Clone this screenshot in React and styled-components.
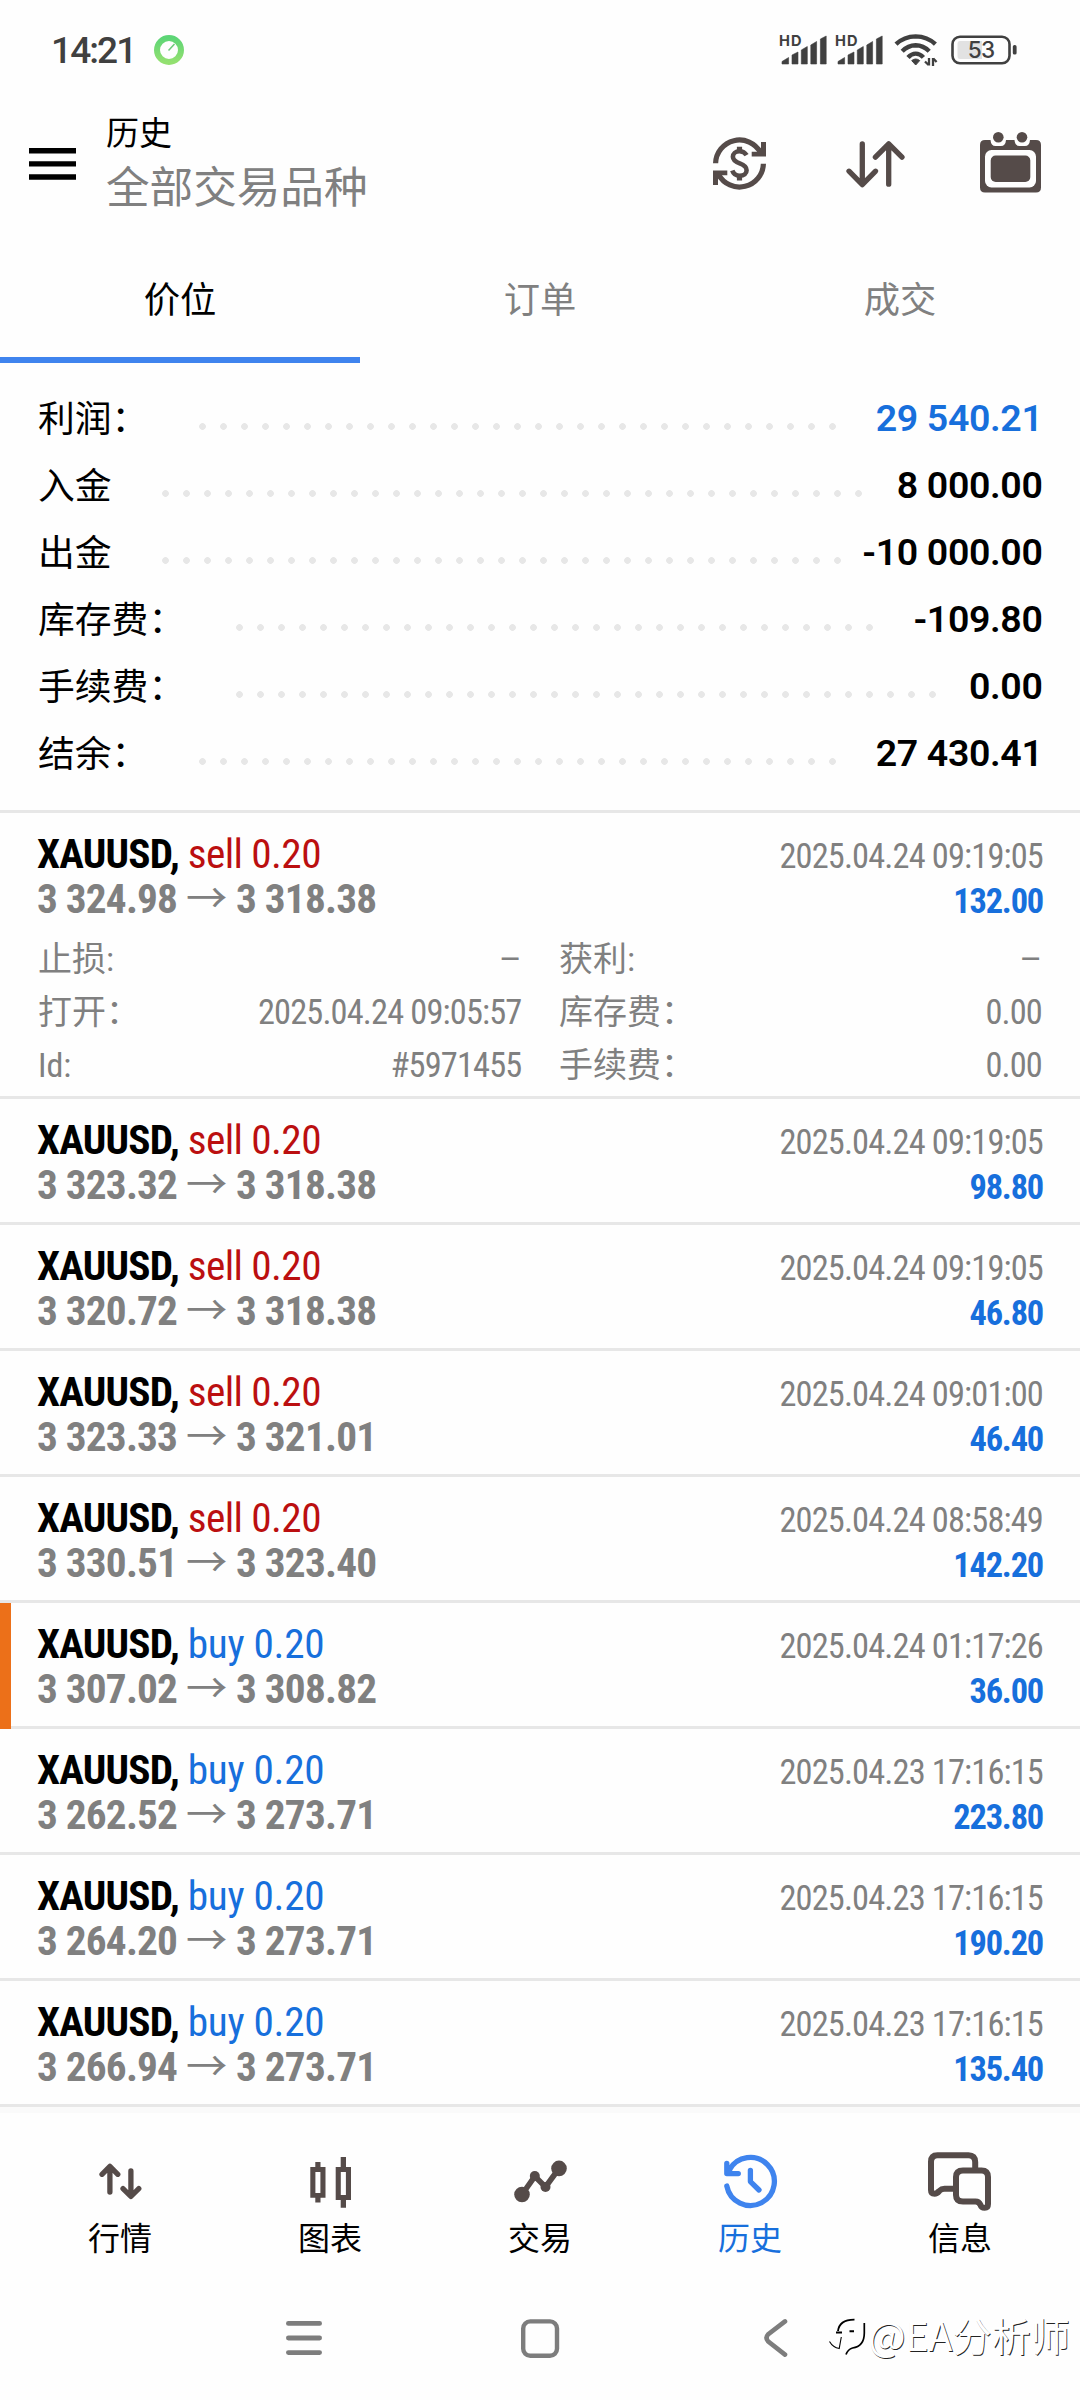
import React from "react";
import styled, { createGlobalStyle } from "styled-components";

const CJK = `"Noto Sans CJK SC"`;
const SANS = `Roboto, ${CJK}, sans-serif`;
const CONDENSED = `"Roboto Condensed", Roboto, ${CJK}, sans-serif`;
const INK = "#554b49";
const BLUE = "#176fdc";
const GREY = "#808080";
const LINE = "#e7e7e7";

const GlobalStyle = createGlobalStyle`
  html, body { margin: 0; background: #fefefe; }
  * { box-sizing: border-box; }
  svg { display: block; flex: none; overflow: visible; }
`;

const Screen = styled.main`
  position: relative;
  display: flex;
  flex-direction: column;
  width: 1080px;
  height: 2400px;
  overflow: hidden;
  background: #fefefe;
  color: #000;
  font-family: ${SANS};
`;

/* status bar */
const StatusBar = styled.div`
  display: flex;
  align-items: center;
  height: 100px;
  padding: 0 63px 0 51px;
  color: #404040;
`;
const Clock = styled.span`
  width: 103px;
  font-size: 37px;
  font-weight: 480;
  letter-spacing: -1.9px;
`;
const StatusIcons = styled.div`
  display: flex;
  align-items: center;
  margin: 0 0 1px auto;
`;
const StatusSlot = styled.div`
  margin-left: ${(p) => p.$gap}px;
`;

/* app bar */
const AppBar = styled.header`
  display: flex;
  align-items: center;
  height: 127px;
  padding: 0 39px 0 29px;
`;
const Titles = styled.div`
  align-self: flex-start;
  margin: 7px auto 0 30px;
`;
const Title = styled.div`
  font-size: 33px;
  line-height: 54px;
`;
const Subtitle = styled.div`
  font-size: 43.6px;
  line-height: 56px;
  color: ${GREY};
`;
const Action = styled.div`
  margin: 0 0 ${(p) => p.$lift || 0}px ${(p) => p.$gap || 0}px;
`;

/* tabs */
const Tabs = styled.nav`
  display: grid;
  grid-template-columns: repeat(3, 1fr);
  height: 136px;
`;
const Tab = styled.div`
  padding-top: 46px;
  border-bottom: 6px solid ${(p) => (p.$active ? "#3f84ee" : "transparent")};
  color: ${(p) => (p.$active ? "#000" : GREY)};
  font-size: 36.3px;
  line-height: 56px;
  text-align: center;
`;

/* summary */
const Summary = styled.section`
  padding: 23px 37.5px 22px 38px;
  border-bottom: 3px solid ${LINE};
`;
const SummaryRow = styled.div`
  display: flex;
  height: 67px;
  line-height: 67px;
  font-size: 36.8px;
  white-space: pre;
`;
const Leader = styled.div`
  width: ${(p) => p.$dots * 21}px;
  height: 7px;
  margin: 37px 0 0 50.5px;
  background: radial-gradient(circle at 3.5px 3.5px, #e7e7e7 3px, transparent 3.7px) 0 0 / 21px 7px repeat-x;
`;
const SummaryValue = styled.span`
  margin-left: auto;
  color: ${(p) => (p.$accent ? BLUE : "#000")};
  font-size: 37.5px;
  font-weight: 620;
  letter-spacing: -0.35px;
  line-height: 65px;
`;

/* deals */
const Deal = styled.article`
  position: relative;
  padding: 18.5px 37px 0;
  height: ${(p) => (p.$open ? 286 : 126)}px;
  border-bottom: 3px solid ${LINE};
  font-family: ${CONDENSED};
`;
const Marker = styled.span`
  position: absolute;
  left: 0;
  top: 0;
  bottom: -3px;
  width: 11px;
  background: #ec7019;
`;
const DealLine = styled.div`
  display: flex;
  align-items: baseline;
  justify-content: space-between;
  height: 45px;
  line-height: 45px;
  font-size: 41.25px;
  letter-spacing: -0.8px;
  white-space: pre;
`;
const Symbol = styled.span`
  font-weight: 700;
`;
const Side = styled.span`
  color: ${(p) => (p.$side === "sell" ? "#bb0f10" : BLUE)};
  letter-spacing: ${(p) => (p.$side === "sell" ? -0.6 : -0.3)}px;
`;
const Prices = styled.span`
  color: ${GREY};
  font-weight: 700;
`;
const Arrow = styled.span`
  font-weight: 400;
  letter-spacing: 0.2px;
`;
const Time = styled.span`
  color: ${GREY};
  font-size: 34.4px;
  letter-spacing: -0.85px;
`;
const Profit = styled.span`
  color: ${BLUE};
  font-size: 34.4px;
  font-weight: 700;
  letter-spacing: -1.2px;
`;
const Details = styled.div`
  display: grid;
  grid-template-columns: 483.5px 483px;
  column-gap: 37.5px;
  margin-top: 11.5px;
  padding-left: 1px;
`;
const Detail = styled.div`
  display: flex;
  justify-content: space-between;
  height: 53px;
  line-height: 53px;
  color: ${GREY};
  font-size: 34px;
`;
const DetailValue = styled.span`
  font-family: ${(p) => (p.$empty ? SANS : CONDENSED)};
  font-size: 34.4px;
  letter-spacing: ${(p) => (p.$empty ? 0 : -0.85)}px;
`;

/* bottom navigation */
const BottomNav = styled.nav`
  display: grid;
  grid-template-columns: repeat(5, 210px);
  height: 173px;
  padding: 36px 15px 0;
  border-top: 6px solid #fafafa;
`;
const NavItem = styled.div`
  display: flex;
  flex-direction: column;
  align-items: center;
  gap: 6px;
  color: ${(p) => (p.$active ? BLUE : "#000")};
  font-size: 32px;
  line-height: 40px;
`;
const SystemNav = styled.div`
  display: flex;
  align-items: center;
  height: 116px;
  padding-left: 286px;
`;
const SystemKey = styled.div`
  margin-left: ${(p) => p.$gap || 0}px;
`;
const Watermark = styled.div`
  position: absolute;
  right: 10px;
  bottom: 39px;
  display: flex;
  align-items: center;
  gap: 1px;
  color: #fff;
  font-family: ${CJK}, sans-serif;
  font-size: 39.2px;
  font-weight: 400;
  line-height: 54px;
  text-shadow: 0.8px 0.8px 0 #222;
`;

const Signal = () => (
  <svg width="47" height="30" viewBox="0 0 47 30" fill="#404040">
    <text x="-1" y="11.4" fontFamily="Inter, sans-serif" fontSize="14.6" fontWeight="700" textLength="22.5">HD</text>
    <path d="M2 29V26.5L8.6 22.5V29ZM12 29V20L18 17V29ZM21.3 29V15L27.3 11.5V29ZM30.8 29V10L36.6 6.5V29ZM40.4 29V4L46.2 1V29Z" stroke="#404040" strokeWidth=".6" strokeLinejoin="round" />
  </svg>
);

const Wifi = () => (
  <svg width="43" height="33" viewBox="0 0 43 33" fill="none" stroke="#404040" strokeWidth="4.4">
    <path d="M2 11.2Q10 3.6 21.7 3.4Q33.4 3.6 41.4 11.2M8.2 18.2Q14 12.3 21.7 12.2Q29.4 12.3 35.2 18.2M14 24.4Q17.5 20.6 21.7 20.6Q26 20.6 29.4 24.4" />
    <path d="M17.7 27.6Q21.7 24.4 25.7 27.6L21.7 32Z" fill="#404040" strokeWidth="1" />
    <path d="M35 25V32.5M34.6 32L31 28.5M39 33V25M39.3 25.5L42.6 29" strokeWidth="2.3" />
  </svg>
);

const Battery = () => (
  <svg width="66" height="30" viewBox="0 0 66 30">
    <rect x="1.5" y="1.7" width="57" height="26.6" rx="7.5" fill="none" stroke="#404040" strokeWidth="2.6" />
    <path d="M9 6H31V24H9Q6.5 24 6.5 21V9Q6.5 6 9 6Z" fill="#e2e2e2" />
    <rect x="61.8" y="10" width="3.8" height="9.6" rx="1.7" fill="#404040" />
    <text x="30" y="23.3" textAnchor="middle" fontFamily="Inter, sans-serif" fontSize="22.6" fontWeight="450" letterSpacing="-.8" fill="#404040">53</text>
  </svg>
);

const Ring = () => (
  <svg width="30" height="30" viewBox="0 0 30 30">
    <defs>
      <linearGradient id="ring" x2="0" y2="1">
        <stop stopColor="#5dd576" />
        <stop offset="1" stopColor="#93e070" />
      </linearGradient>
    </defs>
    <circle cx="15" cy="15" r="12" fill="none" stroke="url(#ring)" strokeWidth="6" />
    <path d="M14.5 15.5L20.5 9" stroke="#6cc97a" strokeWidth="1.5" />
  </svg>
);

const Menu = () => (
  <svg width="47" height="32" viewBox="0 0 47 32">
    <path d="M0 0H47V5.5H0ZM0 13.3H47V18.5H0ZM0 26.3H47V31.7H0Z" />
  </svg>
);

const Currency = () => (
  <svg width="53" height="53" viewBox="0 0 53 53" fill="none" stroke={INK} strokeWidth="5.2">
    <path d="M2.6 26.3A23.9 23.9 0 0 1 47.5 15.5M50.4 26.7A23.9 23.9 0 0 1 5.5 37.5" />
    <path d="M48 5H53V19.4H38.7V14.8H44.5L48 11ZM5 48H0V33.6H14.3V38.2H8.5L5 42Z" fill={INK} stroke="none" />
    <path d="M33.6 18.2C32 15.5 30 14.2 26.5 14.2C22.5 14.2 19.9 16.8 19.9 19.8C19.9 23.2 22.5 24.8 26.7 26.4C31 28 33.6 30 33.6 33.2C33.6 36.5 31 38.8 26.7 38.8C22.5 38.8 20.3 36.6 19.3 33.6" strokeWidth="4.6" />
    <path d="M26.5 9.8V14M26.5 39V43.4" />
  </svg>
);

const Sort = () => (
  <svg width="59" height="48" viewBox="0 0 59 48" fill="none" stroke={INK} strokeWidth="5.3" strokeLinecap="round" strokeLinejoin="round">
    <path d="M16.3 4V44.3M3 31.2L16.3 44.6L29.6 31.2M42.7 44.2V4M29.4 17.2L42.7 3.8L56 17.2" />
  </svg>
);

const Calendar = () => (
  <svg width="61" height="61" viewBox="0 0 61 61" fill={INK}>
    <path d="M5 8H10.5Q11 14 15.5 14H21Q25.5 14 26 8H34.5Q35 14 39.5 14H45Q49.5 14 50 8H56Q61 8 61 13V55.5Q61 60.5 56 60.5H5Q0 60.5 0 55.5V13Q0 8 5 8Z" />
    <rect x="5" y="18" width="51" height="37.4" rx="6.5" fill="#fefefe" />
    <rect x="10.7" y="23.6" width="39.6" height="26.4" rx="5" />
    <circle cx="18.3" cy="5.3" r="5.3" />
    <circle cx="42" cy="5.3" r="5.3" />
  </svg>
);

const QuotesIcon = () => (
  <svg width="64" height="64" viewBox="0 0 64 64" fill="none" stroke={INK} strokeWidth="5.3" strokeLinecap="round" strokeLinejoin="round">
    <path d="M21.9 43V18M14 25.3L21.9 17.4L29.8 25.3M42.9 22V47M35 39.6L42.9 47.5L50.8 39.6" />
  </svg>
);

const ChartIcon = () => (
  <svg width="64" height="64" viewBox="0 0 64 64" fill={INK} fillRule="evenodd">
    <path d="M17.3 13H22.5V18H27.5V48.8H22.5V53.4H17.3V48.8H12.3V18H17.3ZM17.4 23V44H22.4V23ZM42.7 8H48V18H53V51H48V58.8H42.7V51H37.7V18H42.7ZM42.8 23V46H47.9V23Z" />
  </svg>
);

const TradeIcon = () => (
  <svg width="64" height="64" viewBox="0 0 64 64" fill={INK}>
    <path d="M14 45.5L26.8 27.3L37.5 38L51 19.5" fill="none" stroke={INK} strokeWidth="5.6" />
    <circle cx="14" cy="45.5" r="7.8" />
    <circle cx="26.8" cy="27" r="5" />
    <circle cx="37.5" cy="38" r="5" />
    <circle cx="51" cy="19.4" r="7.8" />
  </svg>
);

const HistoryIcon = () => (
  <svg width="64" height="64" viewBox="0 0 64 64" fill="none" stroke="#3f84ee" strokeWidth="5.3" strokeLinecap="round" strokeLinejoin="round">
    <path d="M8.8 37A24 24 0 1 0 11.3 21M8.8 14.5V24.6H20.3" />
    <path d="M8.8 20L11.4 18.5L16 24.6H8.8Z" fill="#3f84ee" strokeWidth="1" />
    <path d="M32.4 21.3V32.6L41 41" />
  </svg>
);

const MessagesIcon = () => (
  <svg width="64" height="64" viewBox="0 0 64 64" fill="none" stroke={INK} strokeWidth="6" strokeLinejoin="round">
    <path d="M47.2 20V13Q47.2 6.2 40.5 6.2H9.5Q3 6.2 3 12.8V41Q3 44.7 6.5 44.7Q9 44.7 11.2 42Q13.4 39.8 16.5 39.8H27" />
    <path d="M35 21.4H53.5Q60 21.4 60 28V55Q60 58.8 56.7 58.8Q53.3 58.8 52.5 56Q51 52.6 47.5 52.6H35Q28 52.6 28 46V28Q28 21.4 35 21.4Z" />
  </svg>
);

const SysMenu = () => (
  <svg width="36" height="36" viewBox="0 0 36 36" stroke="#7d7d7d" strokeWidth="4.8" strokeLinecap="round">
    <path d="M2.4 3.4H33.6M2.4 18H33.6M2.4 32.6H33.6" />
  </svg>
);
const SysHome = () => (
  <svg width="38" height="39" viewBox="0 0 38 39" fill="none" stroke="#7d7d7d" strokeWidth="4.4">
    <rect x="2.2" y="2.4" width="33.8" height="34.4" rx="7" />
  </svg>
);
const SysBack = () => (
  <svg width="26" height="38" viewBox="0 0 26 38" fill="none" stroke="#7d7d7d" strokeWidth="4.6" strokeLinecap="round">
    <path d="M23 2.4L6 15.5Q3 18.8 6 22.2L23 35.6" />
  </svg>
);

const WatermarkLogo = () => (
  <svg width="39" height="40" viewBox="0 0 39 40" fill="none" stroke="#000" strokeWidth="1.9">
    <path d="M10 17C11 9 17 5.5 26.5 5.6M8 18.5H14M21.5 17.3H26" />
    <path d="M36.3 9V19C36.3 28 31.5 33 24.5 34Q20 35.3 18 40.5" strokeWidth="1.7" />
    <path d="M13.3 23L11.2 34.5Q5 33.5 1.5 27.5" strokeWidth="1.1" />
  </svg>
);

const summary = [
  ["利润：", "29 540.21", 31, true],
  ["入金", "8 000.00", 34],
  ["出金", "-10 000.00", 33],
  ["库存费：", "-109.80", 31],
  ["手续费：", "0.00", 34],
  ["结余：", "27 430.41", 31],
];

const details = [
  ["止损:", "–"],
  ["获利:", "–"],
  ["打开：", "2025.04.24 09:05:57"],
  ["库存费：", "0.00"],
  ["Id:", "#5971455"],
  ["手续费：", "0.00"],
];

const deals = [
  { side: "sell", from: "3 324.98", to: "3 318.38", time: "2025.04.24 09:19:05", profit: "132.00", details },
  { side: "sell", from: "3 323.32", to: "3 318.38", time: "2025.04.24 09:19:05", profit: "98.80" },
  { side: "sell", from: "3 320.72", to: "3 318.38", time: "2025.04.24 09:19:05", profit: "46.80" },
  { side: "sell", from: "3 323.33", to: "3 321.01", time: "2025.04.24 09:01:00", profit: "46.40" },
  { side: "sell", from: "3 330.51", to: "3 323.40", time: "2025.04.24 08:58:49", profit: "142.20" },
  { side: "buy", from: "3 307.02", to: "3 308.82", time: "2025.04.24 01:17:26", profit: "36.00", marked: true },
  { side: "buy", from: "3 262.52", to: "3 273.71", time: "2025.04.23 17:16:15", profit: "223.80" },
  { side: "buy", from: "3 264.20", to: "3 273.71", time: "2025.04.23 17:16:15", profit: "190.20" },
  { side: "buy", from: "3 266.94", to: "3 273.71", time: "2025.04.23 17:16:15", profit: "135.40" },
];

const navItems = [
  ["行情", QuotesIcon],
  ["图表", ChartIcon],
  ["交易", TradeIcon],
  ["历史", HistoryIcon, true],
  ["信息", MessagesIcon],
];

export default function App() {
  return (
    <Screen>
      <GlobalStyle />
      <StatusBar>
        <Clock>14:21</Clock>
        <Ring />
        <StatusIcons>
          <Signal />
          <StatusSlot $gap={9}><Signal /></StatusSlot>
          <StatusSlot $gap={11}><Wifi /></StatusSlot>
          <StatusSlot $gap={14}><Battery /></StatusSlot>
        </StatusIcons>
      </StatusBar>

      <AppBar>
        <Menu />
        <Titles>
          <Title>历史</Title>
          <Subtitle>全部交易品种</Subtitle>
        </Titles>
        <Action><Currency /></Action>
        <Action $gap={80}><Sort /></Action>
        <Action $gap={75} $lift={2}><Calendar /></Action>
      </AppBar>

      <Tabs>
        <Tab $active>价位</Tab>
        <Tab>订单</Tab>
        <Tab>成交</Tab>
      </Tabs>

      <Summary>
        {summary.map(([label, value, dots, accent]) => (
          <SummaryRow key={label}>
            <span>{label}</span>
            <Leader $dots={dots} />
            <SummaryValue $accent={accent}>{value}</SummaryValue>
          </SummaryRow>
        ))}
      </Summary>

      {deals.map((d) => (
        <Deal key={d.from} $open={!!d.details}>
          {d.marked && <Marker />}
          <DealLine>
            <span>
              <Symbol>XAUUSD, </Symbol>
              <Side $side={d.side}>{d.side} 0.20</Side>
            </span>
            <Time>{d.time}</Time>
          </DealLine>
          <DealLine>
            <Prices>
              {d.from} <Arrow>→</Arrow> {d.to}
            </Prices>
            <Profit>{d.profit}</Profit>
          </DealLine>
          {d.details && (
            <Details>
              {d.details.map(([label, value]) => (
                <Detail key={label}>
                  <span>{label}</span>
                  <DetailValue $empty={value === "–"}>{value}</DetailValue>
                </Detail>
              ))}
            </Details>
          )}
        </Deal>
      ))}

      <BottomNav>
        {navItems.map(([label, Icon, active]) => (
          <NavItem key={label} $active={active}>
            <Icon />
            {label}
          </NavItem>
        ))}
      </BottomNav>
      <SystemNav>
        <SystemKey><SysMenu /></SystemKey>
        <SystemKey $gap={199}><SysHome /></SystemKey>
        <SystemKey $gap={202.5}><SysBack /></SystemKey>
      </SystemNav>
      <Watermark>
        <WatermarkLogo />
        @EA分析师
      </Watermark>
    </Screen>
  );
}
